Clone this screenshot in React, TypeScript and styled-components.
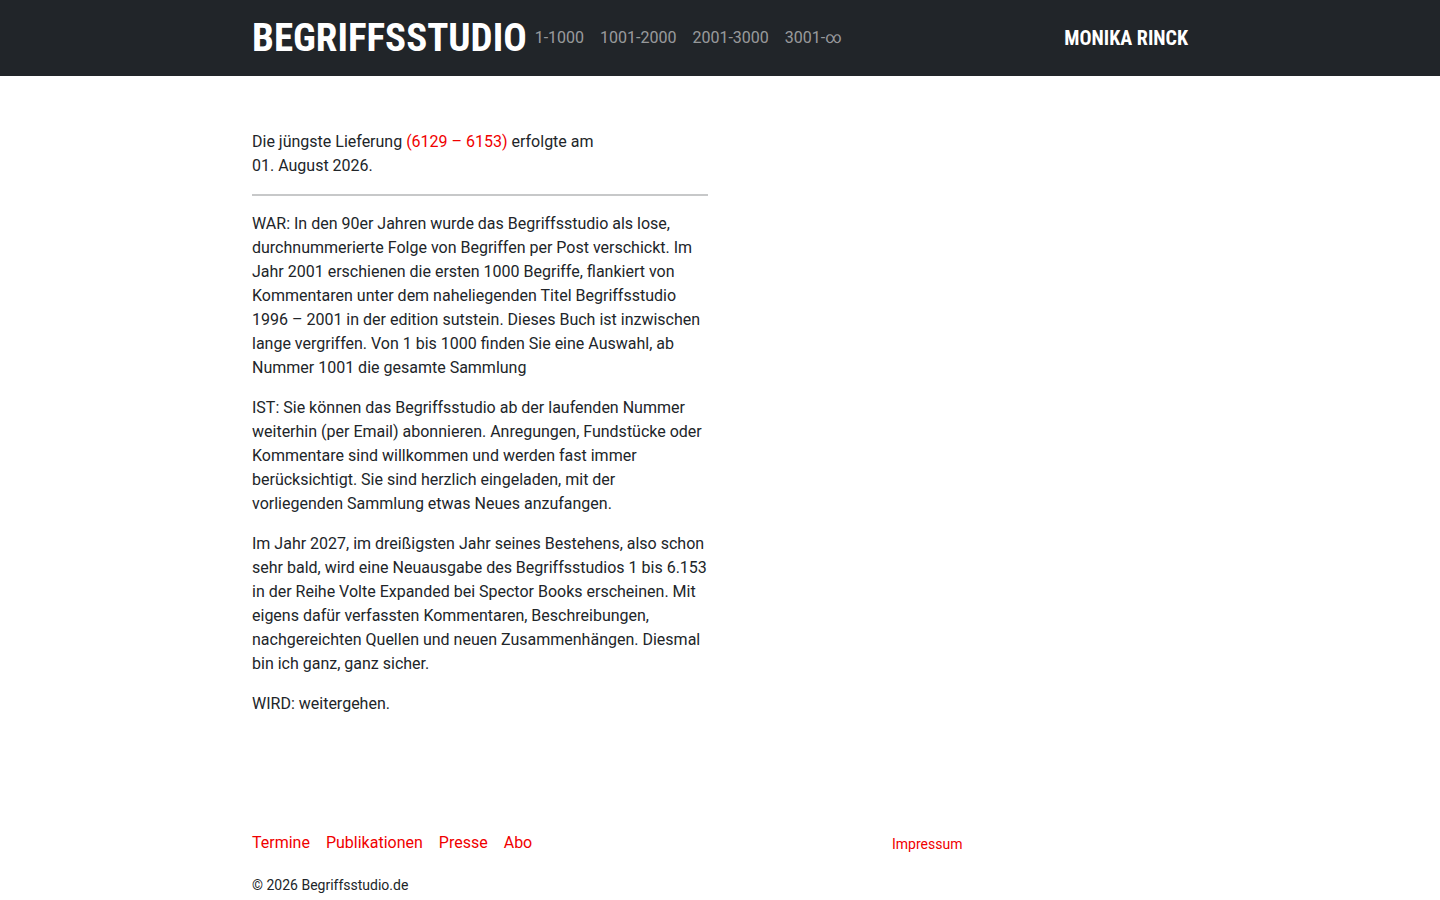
import React from "react";
import styled, { createGlobalStyle } from "styled-components";

const GlobalStyle = createGlobalStyle`
  *, *::before, *::after { box-sizing: border-box; }
  body {
    margin: 0;
    background: #fff;
    color: #212529;
    font-family: Roboto, "Liberation Sans", sans-serif;
    font-size: 16px;
    line-height: 24px;
  }
`;

const Container = styled.div`
  width: 100%;
  max-width: 960px;
  margin: 0 auto;
  padding: 0 12px;
`;

const Header = styled.header`
  background: #212529;
`;

const Navbar = styled(Container)`
  display: flex;
  align-items: center;
  min-height: 76px;
`;

const Wordmark = styled.a<{ $large?: boolean }>`
  color: #fff;
  font-family: "Roboto Condensed", "Noto Sans Mono CJK SC", Roboto, sans-serif;
  font-weight: 700;
  font-size: ${({ $large }) => ($large ? "39px" : "20px")};
  line-height: ${({ $large }) => ($large ? "44px" : "24px")};
  text-decoration: none;
  text-transform: uppercase;
  white-space: nowrap;
`;

const NavList = styled.ul`
  display: flex;
  flex: 1;
  margin: 0;
  padding: 0;
  list-style: none;
`;

const NavLink = styled.a`
  display: block;
  padding: 8px;
  color: rgba(255, 255, 255, 0.55);
  text-decoration: none;
  white-space: nowrap;
`;

const Content = styled(Container)`
  padding-top: 54px;
`;

const Article = styled.article`
  width: calc(50% - 12px);

  @media (max-width: 767px) {
    width: 100%;
  }
`;

const Paragraph = styled.p`
  margin: 0 0 16px;
`;

const Divider = styled.hr`
  height: 2px;
  margin: 16px 0;
  border: 0;
  background: #c7c8c9;
`;

const RedLink = styled.a<{ $small?: boolean }>`
  display: ${({ $small }) => ($small ? "block" : "inline")};
  color: #f00000;
  font-size: ${({ $small }) => ($small ? "14px" : "16px")};
  line-height: ${({ $small }) => ($small ? "21px" : "24px")};
  text-decoration: none;
`;

const Footer = styled(Container)`
  padding-top: 99px;
`;

const FooterGrid = styled.div`
  display: grid;
  grid-template-columns: 2fr 1fr;
  align-items: end;
  margin: 0 -12px;
`;

const FooterLinks = styled.nav`
  display: flex;
  gap: 16px;
  padding: 0 12px;
`;

const Copyright = styled.p`
  margin: 18px 0 16px;
  font-size: 14px;
`;

const ranges = ["1-1000", "1001-2000", "2001-3000", "3001-∞"];
const footerLinks = ["Termine", "Publikationen", "Presse", "Abo"];

const paragraphs = [
  "WAR: In den 90er Jahren wurde das Begriffsstudio als lose, durchnummerierte Folge von Begriffen per Post verschickt. Im Jahr 2001 erschienen die ersten 1000 Begriffe, flankiert von Kommentaren unter dem naheliegenden Titel Begriffsstudio 1996 – 2001 in der edition sutstein. Dieses Buch ist inzwischen lange vergriffen. Von 1 bis 1000 finden Sie eine Auswahl, ab Nummer 1001 die gesamte Sammlung",
  "IST: Sie können das Begriffsstudio ab der laufenden Nummer weiterhin (per Email) abonnieren. Anregungen, Fundstücke oder Kommentare sind willkommen und werden fast immer berücksichtigt. Sie sind herzlich eingeladen, mit der vorliegenden Sammlung etwas Neues anzufangen.",
  "Im Jahr 2027, im dreißigsten Jahr seines Bestehens, also schon sehr bald, wird eine Neuausgabe des Begriffsstudios 1 bis 6.153 in der Reihe Volte Expanded bei Spector Books erscheinen. Mit eigens dafür verfassten Kommentaren, Beschreibungen, nachgereichten Quellen und neuen Zusammenhängen. Diesmal bin ich ganz, ganz sicher.",
  "WIRD: weitergehen.",
];

export default function App() {
  return (
    <>
      <GlobalStyle />
      <Header>
        <Navbar as="nav">
          <Wordmark href="#" $large>Begriffsstudio</Wordmark>
          <NavList>
            {ranges.map((range) => (
              <li key={range}>
                <NavLink href="#">{range}</NavLink>
              </li>
            ))}
          </NavList>
          <Wordmark href="#">Monika Rinck</Wordmark>
        </Navbar>
      </Header>
      <Content as="main">
        <Article>
          <Paragraph>
            Die jüngste Lieferung <RedLink href="#">(6129 – 6153)</RedLink> erfolgte am
            <br />
            01. August 2026.
          </Paragraph>
          <Divider />
          {paragraphs.map((text) => (
            <Paragraph key={text}>{text}</Paragraph>
          ))}
        </Article>
      </Content>
      <Footer as="footer">
        <FooterGrid>
          <FooterLinks>
            {footerLinks.map((label) => (
              <RedLink key={label} href="#">{label}</RedLink>
            ))}
          </FooterLinks>
          <FooterLinks>
            <RedLink href="#" $small>Impressum</RedLink>
          </FooterLinks>
        </FooterGrid>
        <Copyright>© 2026 Begriffsstudio.de</Copyright>
      </Footer>
    </>
  );
}
